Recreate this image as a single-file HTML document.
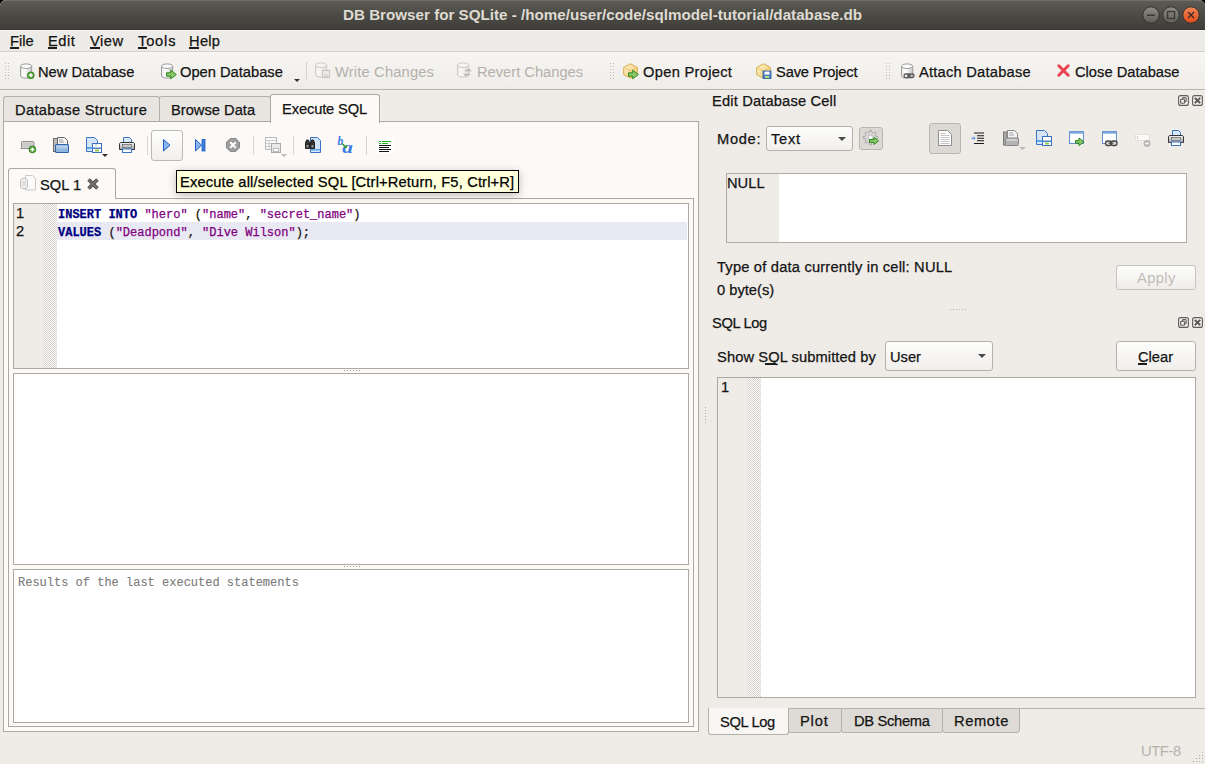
<!DOCTYPE html>
<html><head><meta charset="utf-8"><style>
*{box-sizing:border-box}
html,body{margin:0;padding:0;width:1205px;height:764px;overflow:hidden;background:#000}
body{font-family:"Liberation Sans",sans-serif;font-size:14.7px;position:relative}
.a{position:absolute}
svg.a{overflow:visible}
.t{position:absolute;line-height:1;white-space:pre;color:#141414;-webkit-text-stroke:0.25px currentColor}
.m{font-family:"Liberation Mono",monospace;font-size:12px}
#win{position:absolute;left:0;top:0;width:1205px;height:764px;background:#efebe7;border-radius:6px 6px 0 0;overflow:hidden}
#title{position:absolute;left:0;top:0;width:1205px;height:30px;background:linear-gradient(#5e5c55,#4b4a44 50%,#403f3b 96%,#353430 96%);box-shadow:inset 0 1px 0 rgba(255,255,255,.12)}
#menubar{position:absolute;left:0;top:30px;width:1205px;height:22px;background:#edebe7;border-bottom:1px solid #d3cfca;box-shadow:inset 0 1px 0 #f7f6f4}
#toolbar{position:absolute;left:0;top:52px;width:1205px;height:38px;background:linear-gradient(#f6f5f2,#f0ede9);border-bottom:1px solid #b9b5b0;box-shadow:inset 0 1px 0 #faf9f7}
.u{position:absolute;height:2px;background:#1c1c1c}
.dis{color:#b3b0ab;-webkit-text-stroke:0}
.frame{position:absolute;border:1px solid #aca8a2;background:#fff}
.chk{background-color:#fff;background-image:linear-gradient(45deg,#d9d5d0 25%,transparent 25%,transparent 75%,#d9d5d0 75%),linear-gradient(45deg,#d9d5d0 25%,transparent 25%,transparent 75%,#d0ccc7 75%);background-size:2px 2px;background-position:0 0,1px 1px}
</style></head><body>
<svg width="0" height="0" style="position:absolute"><defs>
<linearGradient id="gcyl" x1="0" x2="1" y1="0" y2="0"><stop offset="0" stop-color="#e9e9e9"/><stop offset=".35" stop-color="#ffffff"/><stop offset="1" stop-color="#c9c9c9"/></linearGradient>
<linearGradient id="gblue" x1="0" x2="0" y1="0" y2="1"><stop offset="0" stop-color="#c4daf3"/><stop offset="1" stop-color="#8fb6e3"/></linearGradient>
<linearGradient id="gbox" x1="0" x2="1" y1="0" y2="1"><stop offset="0" stop-color="#fff3cf"/><stop offset="1" stop-color="#f0c868"/></linearGradient>
<linearGradient id="gprn" x1="0" x2="0" y1="0" y2="1"><stop offset="0" stop-color="#f4f4f4"/><stop offset="1" stop-color="#a8a8a8"/></linearGradient>
<linearGradient id="gwb" x1="0" x2="0" y1="0" y2="1"><stop offset="0" stop-color="#8d8c87"/><stop offset="1" stop-color="#5e5d58"/></linearGradient><linearGradient id="gwc" x1="0" x2="0" y1="0" y2="1"><stop offset="0" stop-color="#f3875a"/><stop offset="1" stop-color="#de4b17"/></linearGradient>
<linearGradient id="gbtn" x1="0" x2="0" y1="0" y2="1"><stop offset="0" stop-color="#fdfdfc"/><stop offset="1" stop-color="#efedea"/></linearGradient>
</defs></svg>
<div id="win">
<div id="title"><div class="t " style="left:343px;top:7px;font-size:15.2px;font-weight:bold;color:#dfdbd2;-webkit-text-stroke:0">DB Browser for SQLite - /home/user/code/sqlmodel-tutorial/database.db</div>
<svg class="a" style="left:1142px;top:6px;" width="18" height="18" viewBox="0 0 18 18"><circle cx="9" cy="9" r="8.2" fill="url(#gwb)" stroke="#34332f" stroke-width="1"/><path d="M5 9.2h8" stroke="#3a3935" stroke-width="1.6"/></svg>
<svg class="a" style="left:1162px;top:6px;" width="18" height="18" viewBox="0 0 18 18"><circle cx="9" cy="9" r="8.2" fill="url(#gwb)" stroke="#34332f" stroke-width="1"/><rect x="5.5" y="5.5" width="7" height="7" fill="none" stroke="#3a3935" stroke-width="1.4"/></svg>
<svg class="a" style="left:1182px;top:6px;" width="18" height="18" viewBox="0 0 18 18"><circle cx="9" cy="9" r="8.2" fill="url(#gwc)" stroke="#34332f" stroke-width="1"/><path d="M6 6l6 6M12 6l-6 6" stroke="#3a2a20" stroke-width="1.4"/></svg>
</div>
<div id="menubar"><div class="t " style="left:10px;top:4px;">File</div>
<div class="u" style="left:10px;top:17px;width:9px"></div><div class="t " style="left:48px;top:4px;letter-spacing:0.5px;">Edit</div>
<div class="u" style="left:48px;top:17px;width:9px"></div><div class="t " style="left:90px;top:4px;letter-spacing:0.5px;">View</div>
<div class="u" style="left:90px;top:17px;width:10px"></div><div class="t " style="left:138px;top:4px;letter-spacing:0.8px;">Tools</div>
<div class="u" style="left:138px;top:17px;width:9px"></div><div class="t " style="left:189px;top:4px;letter-spacing:0.27px;">Help</div>
<div class="u" style="left:189px;top:17px;width:10px"></div></div>
<div id="toolbar"><div class="a" style="left:5px;top:11px;width:1px;height:1px;background:#bdb9b3"></div>
<div class="a" style="left:8px;top:11px;width:1px;height:1px;background:#bdb9b3"></div>
<div class="a" style="left:5px;top:14px;width:1px;height:1px;background:#bdb9b3"></div>
<div class="a" style="left:8px;top:14px;width:1px;height:1px;background:#bdb9b3"></div>
<div class="a" style="left:5px;top:17px;width:1px;height:1px;background:#bdb9b3"></div>
<div class="a" style="left:8px;top:17px;width:1px;height:1px;background:#bdb9b3"></div>
<div class="a" style="left:5px;top:20px;width:1px;height:1px;background:#bdb9b3"></div>
<div class="a" style="left:8px;top:20px;width:1px;height:1px;background:#bdb9b3"></div>
<div class="a" style="left:5px;top:23px;width:1px;height:1px;background:#bdb9b3"></div>
<div class="a" style="left:8px;top:23px;width:1px;height:1px;background:#bdb9b3"></div>
<div class="a" style="left:5px;top:26px;width:1px;height:1px;background:#bdb9b3"></div>
<div class="a" style="left:8px;top:26px;width:1px;height:1px;background:#bdb9b3"></div>
<div class="a" style="left:610px;top:11px;width:1px;height:1px;background:#bdb9b3"></div>
<div class="a" style="left:613px;top:11px;width:1px;height:1px;background:#bdb9b3"></div>
<div class="a" style="left:610px;top:14px;width:1px;height:1px;background:#bdb9b3"></div>
<div class="a" style="left:613px;top:14px;width:1px;height:1px;background:#bdb9b3"></div>
<div class="a" style="left:610px;top:17px;width:1px;height:1px;background:#bdb9b3"></div>
<div class="a" style="left:613px;top:17px;width:1px;height:1px;background:#bdb9b3"></div>
<div class="a" style="left:610px;top:20px;width:1px;height:1px;background:#bdb9b3"></div>
<div class="a" style="left:613px;top:20px;width:1px;height:1px;background:#bdb9b3"></div>
<div class="a" style="left:610px;top:23px;width:1px;height:1px;background:#bdb9b3"></div>
<div class="a" style="left:613px;top:23px;width:1px;height:1px;background:#bdb9b3"></div>
<div class="a" style="left:610px;top:26px;width:1px;height:1px;background:#bdb9b3"></div>
<div class="a" style="left:613px;top:26px;width:1px;height:1px;background:#bdb9b3"></div>
<div class="a" style="left:886px;top:11px;width:1px;height:1px;background:#bdb9b3"></div>
<div class="a" style="left:889px;top:11px;width:1px;height:1px;background:#bdb9b3"></div>
<div class="a" style="left:886px;top:14px;width:1px;height:1px;background:#bdb9b3"></div>
<div class="a" style="left:889px;top:14px;width:1px;height:1px;background:#bdb9b3"></div>
<div class="a" style="left:886px;top:17px;width:1px;height:1px;background:#bdb9b3"></div>
<div class="a" style="left:889px;top:17px;width:1px;height:1px;background:#bdb9b3"></div>
<div class="a" style="left:886px;top:20px;width:1px;height:1px;background:#bdb9b3"></div>
<div class="a" style="left:889px;top:20px;width:1px;height:1px;background:#bdb9b3"></div>
<div class="a" style="left:886px;top:23px;width:1px;height:1px;background:#bdb9b3"></div>
<div class="a" style="left:889px;top:23px;width:1px;height:1px;background:#bdb9b3"></div>
<div class="a" style="left:886px;top:26px;width:1px;height:1px;background:#bdb9b3"></div>
<div class="a" style="left:889px;top:26px;width:1px;height:1px;background:#bdb9b3"></div>
<div class="a" style="left:306px;top:10px;width:1px;height:18px;background:#d6d2cc"></div>
<div class="t " style="left:38px;top:13px;">New Database</div>
<div class="t " style="left:180px;top:13px;">Open Database</div>
<div class="t dis" style="left:335px;top:13px;letter-spacing:0.17px;">Write Changes</div>
<div class="t dis" style="left:477px;top:13px;">Revert Changes</div>
<div class="t " style="left:643px;top:13px;letter-spacing:0.29px;">Open Project</div>
<div class="t " style="left:776px;top:13px;letter-spacing:-0.15px;">Save Project</div>
<div class="t " style="left:919px;top:13px;letter-spacing:0.22px;">Attach Database</div>
<div class="t " style="left:1075px;top:13px;">Close Database</div>
<svg class="a" style="left:294px;top:27px;" width="6" height="3" viewBox="0 0 6 3"><path d="M0 0h6l-3 3z" fill="#333"/></svg>
</div>
<svg class="a" style="left:20px;top:63px;" width="16" height="16" viewBox="0 0 16 16"><path d="M0.5 3.2v9.6c0 1.3 2.5 2.3 5.6 2.3s5.6-1 5.6-2.3V3.2" fill="url(#gcyl)" stroke="#9d9d9d"/><ellipse cx="6.1" cy="3.2" rx="5.6" ry="2.3" fill="#fafafa" stroke="#9d9d9d"/><circle cx="10.8" cy="12.3" r="3.4" fill="#54a336" stroke="#2f7d1c" stroke-width=".9"/><path d="M10.8 10.3v4M8.8 12.3h4" stroke="#fff" stroke-width="1.5"/></svg>
<svg class="a" style="left:161px;top:63px;" width="16" height="16" viewBox="0 0 16 16"><path d="M0.5 3.2v9.6c0 1.3 2.5 2.3 5.6 2.3s5.6-1 5.6-2.3V3.2" fill="url(#gcyl)" stroke="#9d9d9d"/><ellipse cx="6.1" cy="3.2" rx="5.6" ry="2.3" fill="#fafafa" stroke="#9d9d9d"/><path d="M5.5 9.8h4.2V7.2l5.6 4.3-5.6 4.3v-2.6H5.5z" fill="#8bc66a" stroke="#2b8a1b" stroke-width="1"/></svg>
<svg class="a" style="left:315px;top:62px;opacity:0.45;" width="16" height="16" viewBox="0 0 16 16"><path d="M0.5 3.2v9.6c0 1.3 2.5 2.3 5.6 2.3s5.6-1 5.6-2.3V3.2" fill="url(#gcyl)" stroke="#9d9d9d"/><ellipse cx="6.1" cy="3.2" rx="5.6" ry="2.3" fill="#fafafa" stroke="#9d9d9d"/><rect x="7.5" y="8.5" width="7" height="7" fill="#e8e8e8" stroke="#8a8a8a"/><rect x="9" y="12" width="4" height="3" fill="#bbb"/></svg>
<svg class="a" style="left:457px;top:62px;opacity:0.45;" width="16" height="16" viewBox="0 0 16 16"><path d="M0.5 3.2v9.6c0 1.3 2.5 2.3 5.6 2.3s5.6-1 5.6-2.3V3.2" fill="url(#gcyl)" stroke="#9d9d9d"/><ellipse cx="6.1" cy="3.2" rx="5.6" ry="2.3" fill="#fafafa" stroke="#9d9d9d"/><path d="M8 8.5h5l-1.5-1.5M13 12.5H8l1.5 1.5" fill="none" stroke="#777" stroke-width="1.5"/></svg>
<svg class="a" style="left:623px;top:63px;" width="16" height="16" viewBox="0 0 16 16"><path d="M7.5 0.8l6.8 3.6v7.2l-6.8 3.6-6.8-3.6V4.4z" fill="url(#gbox)" stroke="#d9ad4a" stroke-width="1"/><path d="M0.8 4.4l6.7 3.5 6.8-3.5M7.5 7.9v7" fill="none" stroke="#e5bf6a" stroke-width=".8"/><path d="M5.5 9.8h4.2V7.2l5.6 4.3-5.6 4.3v-2.6H5.5z" fill="#8bc66a" stroke="#2b8a1b" stroke-width="1"/></svg>
<svg class="a" style="left:756px;top:63px;" width="16" height="16" viewBox="0 0 16 16"><path d="M7.5 0.8l6.8 3.6v7.2l-6.8 3.6-6.8-3.6V4.4z" fill="url(#gbox)" stroke="#d9ad4a" stroke-width="1"/><path d="M0.8 4.4l6.7 3.5 6.8-3.5M7.5 7.9v7" fill="none" stroke="#e5bf6a" stroke-width=".8"/><rect x="7" y="8" width="8" height="7.5" fill="#4d7fc4" stroke="#2c5a9c" stroke-width=".8"/><rect x="8.5" y="8.6" width="5" height="3" fill="#fff"/><rect x="9" y="13" width="4" height="2" fill="#a9e07a"/></svg>
<svg class="a" style="left:901px;top:63px;" width="16" height="16" viewBox="0 0 16 16"><path d="M0.5 3.2v9.6c0 1.3 2.5 2.3 5.6 2.3s5.6-1 5.6-2.3V3.2" fill="url(#gcyl)" stroke="#9d9d9d"/><ellipse cx="6.1" cy="3.2" rx="5.6" ry="2.3" fill="#fafafa" stroke="#9d9d9d"/><rect x="3" y="11" width="5.5" height="3.6" rx="1.8" fill="none" stroke="#555" stroke-width="1.3"/><rect x="7.5" y="11" width="5.5" height="3.6" rx="1.8" fill="none" stroke="#555" stroke-width="1.3"/><path d="M6 12.8h4" stroke="#555" stroke-width="1.3"/></svg>
<svg class="a" style="left:1056px;top:63px;" width="16" height="16" viewBox="0 0 16 16"><path d="M2.8 2.8l9.4 9.4M12.2 2.8l-9.4 9.4" stroke="#e8434e" stroke-width="3" stroke-linecap="round"/></svg>
 <!-- left tab widget -->
 <div class="a" style="left:3px;top:96px;width:157px;height:26px;background:#e8e5e1;border:1px solid #b4b0aa;border-bottom:none;border-radius:3px 3px 0 0"></div>
 <div class="a" style="left:159px;top:96px;width:112px;height:26px;background:#e8e5e1;border:1px solid #b4b0aa;border-bottom:none;border-radius:3px 3px 0 0"></div>
 <div class="t" style="left:15px;top:103px;letter-spacing:0.31px;">Database Structure</div>
 <div class="t" style="left:171px;top:103px">Browse Data</div>
 <div id="lpane" class="a" style="left:3px;top:121px;width:696px;height:611px;background:#fcf9f6;border:1px solid #aca8a2"></div>
 <div class="a" style="left:270px;top:94px;width:110px;height:29px;background:#fcf9f6;border:1px solid #aca8a2;border-bottom:none;border-radius:3px 3px 0 0"></div>
 <div class="t" style="left:282px;top:102px;letter-spacing:-0.13px;">Execute SQL</div>

 <!-- SQL toolbar execute button -->
 <div class="a" style="left:151px;top:130px;width:32px;height:31px;border:1px solid #bdb9b4;border-radius:3px;background:linear-gradient(#fefefd,#f2f0ed)"></div>
 <div class="a" style="left:147px;top:136px;width:1px;height:19px;background:#d9d5d0"></div>
 <div class="a" style="left:253px;top:136px;width:1px;height:19px;background:#d9d5d0"></div>
 <div class="a" style="left:293px;top:136px;width:1px;height:19px;background:#d9d5d0"></div>
 <div class="a" style="left:366px;top:136px;width:1px;height:19px;background:#d9d5d0"></div>

 <!-- SQL editor tab -->
 <div class="a" style="left:8px;top:198px;width:686px;height:529px;background:#fcf9f6;border:1px solid #aca8a2"></div>
 <div class="a" style="left:8px;top:168px;width:108px;height:31px;background:#fcf9f6;border:1px solid #aca8a2;border-bottom:none;border-radius:3px 3px 0 0"></div>
 <div class="t" style="left:40px;top:178px">SQL 1</div>

 <!-- editor -->
 <div class="frame" style="left:13px;top:203px;width:676px;height:166px"></div>
 <div class="a" style="left:14px;top:204px;width:29px;height:164px;background:#efebe7"></div>
 <div class="a" style="left:43px;top:204px;width:14px;height:164px;background-color:#fff;background-image:linear-gradient(45deg,#d4d0cb 25%,transparent 25%,transparent 75%,#d4d0cb 75%),linear-gradient(45deg,#d4d0cb 25%,transparent 25%,transparent 75%,#d4d0cb 75%);background-size:2px 2px;background-position:0 0,1px 1px"></div>
 <div class="a" style="left:57px;top:222px;width:630px;height:18px;background:#e9e9f3"></div>
 <div class="t" style="left:16px;top:206px">1</div>
 <div class="t" style="left:16px;top:224px">2</div>
 <div class="t m" style="left:58px;top:209px"><b style="color:#000080">INSERT INTO</b> <span style="color:#800080">"hero"</span> (<span style="color:#800080">"name"</span>, <span style="color:#800080">"secret_name"</span>)</div>
 <div class="t m" style="left:58px;top:227px"><b style="color:#000080">VALUES</b> (<span style="color:#800080">"Deadpond"</span>, <span style="color:#800080">"Dive Wilson"</span>);</div>

 <div class="frame" style="left:13px;top:373px;width:676px;height:192px"></div>
 <div class="frame" style="left:13px;top:569px;width:676px;height:154px"></div>
 <div class="t m" style="left:18px;top:577px;color:#7a7a7a;-webkit-text-stroke:0.1px">Results of the last executed statements</div>

 <!-- tooltip -->
 <div class="a" style="left:176px;top:170px;width:343px;height:23px;background:#ffffdc;border:1px solid #000;box-shadow:0 2px 8px rgba(0,0,0,.25)"></div>
 <div class="t" style="left:180px;top:175px;color:#000;letter-spacing:0.15px;">Execute all/selected SQL [Ctrl+Return, F5, Ctrl+R]</div>

 <!-- right dock -->
 <div class="t" style="left:712px;top:94px;letter-spacing:0.15px;">Edit Database Cell</div>
 <div class="t" style="left:717px;top:132px;letter-spacing:0.67px;">Mode:</div>
 <div class="a" style="left:766px;top:126px;width:87px;height:25px;border:1px solid #b4b0aa;border-radius:3px;background:linear-gradient(#fdfdfc,#f1efec)"></div>
 <div class="t" style="left:771px;top:132px;letter-spacing:0.7px;">Text</div>
 <div class="a" style="left:859px;top:127px;width:24px;height:23px;border:1px solid #b9b5b0;border-radius:3px;background:#dcd8d3"></div>
 <div class="a" style="left:929px;top:123px;width:32px;height:31px;border:1px solid #b9b5b0;border-radius:3px;background:#dcd8d3"></div>

 <div class="a" style="left:726px;top:173px;width:461px;height:70px;border:1px solid #aca8a2;background:#fff"></div>
 <div class="a" style="left:727px;top:174px;width:52px;height:68px;background:#efebe7"></div>
 <div class="t" style="left:727px;top:176px">NULL</div>
 <div class="t" style="left:717px;top:260px;letter-spacing:0.19px;">Type of data currently in cell: NULL</div>
 <div class="t" style="left:717px;top:283px">0 byte(s)</div>
 <div class="a" style="left:1116px;top:265px;width:80px;height:25px;border:1px solid #c6c2bd;border-radius:3px;background:linear-gradient(#fdfdfc,#efedea)"></div>
 <div class="t dis" style="left:1137px;top:271px;color:#bfbcb7;-webkit-text-stroke:0;letter-spacing:0.4px">Apply</div>

 <div class="t" style="left:712px;top:316px;letter-spacing:-0.37px;">SQL Log</div>
 <div class="t" style="left:717px;top:350px;letter-spacing:0.09px;">Show SQL submitted by</div>
 <div class="a" style="left:885px;top:341px;width:108px;height:30px;border:1px solid #b4b0aa;border-radius:3px;background:linear-gradient(#fdfdfc,#f1efec)"></div>
 <div class="t" style="left:890px;top:350px">User</div>
 <div class="u" style="left:765px;top:363px;width:11px"></div>
 <div class="a" style="left:1116px;top:341px;width:80px;height:30px;border:1px solid #b4b0aa;border-radius:3px;background:linear-gradient(#fdfdfc,#f1efec)"></div>
 <div class="t" style="left:1138px;top:350px">Clear</div>
 <div class="u" style="left:1138px;top:363px;width:9px"></div>

 <div class="a" style="left:717px;top:377px;width:479px;height:321px;border:1px solid #aca8a2;background:#fff"></div>
 <div class="a" style="left:718px;top:378px;width:29px;height:319px;background:#efebe7"></div>
 <div class="a" style="left:747px;top:378px;width:14px;height:319px;background-color:#fff;background-image:linear-gradient(45deg,#d4d0cb 25%,transparent 25%,transparent 75%,#d4d0cb 75%),linear-gradient(45deg,#d4d0cb 25%,transparent 25%,transparent 75%,#d4d0cb 75%);background-size:2px 2px;background-position:0 0,1px 1px"></div>
 <div class="t" style="left:721px;top:380px">1</div>

 <!-- bottom tabs -->
 <div class="a" style="left:708px;top:708px;width:497px;height:1px;background:#b4b0aa"></div>
 <div class="a" style="left:788px;top:708px;width:54px;height:25px;background:#dedad5;border:1px solid #b4b0aa;border-radius:0 0 3px 3px"></div>
 <div class="a" style="left:841px;top:708px;width:102px;height:25px;background:#dedad5;border:1px solid #b4b0aa;border-radius:0 0 3px 3px"></div>
 <div class="a" style="left:942px;top:708px;width:78px;height:25px;background:#dedad5;border:1px solid #b4b0aa;border-radius:0 0 3px 3px"></div>
 <div class="a" style="left:708px;top:708px;width:81px;height:27px;background:#f7f6f3;border:1px solid #b4b0aa;border-top:none;border-radius:0 0 3px 3px"></div>
 <div class="t" style="left:720px;top:715px;letter-spacing:-0.37px;">SQL Log</div>
 <div class="t" style="left:800px;top:714px;letter-spacing:0.8px;">Plot</div>
 <div class="t" style="left:854px;top:714px;letter-spacing:-0.31px;">DB Schema</div>
 <div class="t" style="left:954px;top:714px;letter-spacing:0.6px;">Remote</div>
 <div class="t" style="left:1141px;top:744px;color:#b5b2ad;-webkit-text-stroke:0;letter-spacing:-0.37px;">UTF-8</div>
<svg class="a" style="left:20px;top:137px;" width="16" height="16" viewBox="0 0 16 16"><path d="M0.5 11.5h2" stroke="#8c8c8c"/><rect x="1.5" y="4.5" width="12.5" height="7" rx="1" fill="#dedede" stroke="#8e8e8e"/><rect x="2.5" y="5.5" width="10.5" height="5" fill="#c9c9c9"/><circle cx="12.4" cy="12.4" r="3.4" fill="#54a336" stroke="#2f7d1c" stroke-width=".9"/><path d="M12.4 10.4v4M10.4 12.4h4" stroke="#fff" stroke-width="1.5"/></svg>
<svg class="a" style="left:53px;top:137px;" width="16" height="16" viewBox="0 0 16 16"><rect x="0.5" y="1.5" width="4" height="13" fill="#bdbdbd" stroke="#6b6b6b"/><path d="M4.5 0.5h7l3 3v6h-10z" fill="#f4f4f4" stroke="#666"/><path d="M6 3h4M6 5h5" stroke="#999"/><rect x="2.5" y="7.5" width="13" height="8" rx=".5" fill="#8fb5e0" stroke="#2f63a8"/><rect x="3.5" y="8.5" width="11" height="3" fill="#b3cdeb"/></svg>
<svg class="a" style="left:86px;top:137px;" width="16" height="16" viewBox="0 0 16 16"><path d="M0.5 0.5h8l3 3v11h-11z" fill="#d5e5f8" stroke="#3b73c4"/><rect x="1" y="10" width="5" height="2" fill="#5aa9ea"/><rect x="6.5" y="6.5" width="9" height="9" fill="#fff" stroke="#3b6fbf"/><rect x="6.5" y="10.5" width="9" height="1.5" fill="#4f82c8"/><rect x="9" y="12.5" width="4" height="2" fill="#8fd04a"/><rect x="9.5" y="7.5" width="1" height="1" fill="#3b6fbf"/></svg>
<svg class="a" style="left:102px;top:154px;" width="6" height="3" viewBox="0 0 6 3"><path d="M0 0h6l-3 3z" fill="#333"/></svg>
<svg class="a" style="left:119px;top:137px;" width="16" height="16" viewBox="0 0 16 16"><path d="M4.5 0.5h6l2 2v5h-8z" fill="#d9e8fa" stroke="#3b73c4"/><path d="M2 5.5h12c1 0 1.5 .8 1.5 1.5v5.5H0.5V7c0-.7.5-1.5 1.5-1.5z" fill="url(#gprn)" stroke="#333"/><rect x="3.5" y="7.5" width="9" height="3" fill="#c8c8c8" stroke="#555" stroke-width=".6"/><rect x="3.5" y="12" width="9" height="3.5" fill="#fff" stroke="#3b73c4"/></svg>
<svg class="a" style="left:163px;top:139px;" width="8" height="13" viewBox="0 0 8 13"><path d="M0.5 0.5L7 6.2 0.5 12z" fill="#8ab4ea" stroke="#1f5fc9" stroke-width="1"/></svg>
<svg class="a" style="left:195px;top:139px;" width="11" height="13" viewBox="0 0 11 13"><path d="M0.5 0.5L6.5 6.2 0.5 12z" fill="#8ab4ea" stroke="#1f5fc9" stroke-width="1"/><rect x="7" y="0.5" width="3" height="11.5" fill="#3f7fd9" stroke="#1f5fc9" stroke-width=".8"/></svg>
<svg class="a" style="left:226px;top:138px;" width="14" height="14" viewBox="0 0 14 14"><path d="M4.2 0.5h5.6l3.7 3.7v5.6l-3.7 3.7H4.2L0.5 9.8V4.2z" fill="#9d9d9d" stroke="#8a8a8a"/><path d="M4.3 4.3l5.4 5.4M9.7 4.3l-5.4 5.4" stroke="#fff" stroke-width="2"/></svg>
<svg class="a" style="left:265px;top:137px;" width="16" height="16" viewBox="0 0 16 16"><rect x="0.5" y="0.5" width="11" height="12" fill="#fafafa" stroke="#bbb"/><path d="M1 3.5h10M4 3.5v9M1 6.5h10M1 9.5h6" stroke="#ccc"/><rect x="6.5" y="6.5" width="9" height="9" fill="#e8e8e8" stroke="#aaa"/><rect x="8.5" y="11.5" width="5" height="3" fill="#fff" stroke="#bbb"/></svg>
<svg class="a" style="left:281px;top:154px;" width="6" height="3" viewBox="0 0 6 3"><path d="M0 0h6l-3 3z" fill="#bbb"/></svg>
<svg class="a" style="left:305px;top:137px;" width="16" height="16" viewBox="0 0 16 16"><path d="M5.5 0.5h7l3 3v12h-10z" fill="#d5e5f8" stroke="#3b73c4"/><rect x="6" y="12" width="9" height="1.5" fill="#5aa9ea"/><path d="M0.5 6v5.5h4V6l-1-3h-2zM5.5 6v5.5h4V6l-1-3h-2z" fill="#333" stroke="#222"/><rect x="1.5" y="8" width="2" height="2.5" fill="#999"/><rect x="6.5" y="8" width="2" height="2.5" fill="#999"/></svg>
<svg class="a" style="left:338px;top:137px;" width="16" height="16" viewBox="0 0 16 16"><text x="-0.5" y="8" font-family="Liberation Serif" font-style="italic" font-weight="bold" font-size="11.5" fill="#3c7fe3">b</text><text x="4.2" y="15.8" font-family="Liberation Serif" font-style="italic" font-weight="bold" font-size="17" fill="#3c7fe3" transform="translate(4.2 15.8) scale(1.25 1) translate(-4.2 -15.8)">a</text><path d="M4 6.5l3.2 3.2" stroke="#3a9a3a" stroke-width="1.6"/><path d="M9 7.5v3.5H5.5z" fill="#3a9a3a"/></svg>
<svg class="a" style="left:377px;top:137px;" width="17" height="16" viewBox="0 0 17 16"><rect x="0" y="0" width="17" height="16" fill="#fff"/><path d="M2 4.5h2M5 4.5h9M2 6.5h2M5 6.5h6" stroke="#22bb22" stroke-width="1"/><path d="M2 8.5h12M2 10.5h10M2 12.5h12M2 14.5h10" stroke="#111" stroke-width="1"/></svg>
<svg class="a" style="left:20px;top:175px;" width="16" height="16" viewBox="0 0 16 16"><path d="M5.5 0.5h7l3 3v11.5h-10z" fill="#fafafa" stroke="#c9c9c9"/><rect x="0.5" y="3.5" width="7" height="10" rx="2.5" fill="#f1f1f1" stroke="#c1c1c1"/><path d="M3 6v5M5 6v5" stroke="#c9c9c9"/></svg>
<svg class="a" style="left:87px;top:178px;" width="12" height="12" viewBox="0 0 12 12"><path d="M1.6 1.6l8.8 8.8M10.4 1.6l-8.8 8.8" stroke="#4a4a4a" stroke-width="3.6"/><path d="M1.6 1.6l8.8 8.8M10.4 1.6l-8.8 8.8" stroke="#6e6e6e" stroke-width="2.2"/></svg>
<div class="a" style="left:344px;top:370px;width:1px;height:1px;background:#9d9994"></div>
<div class="a" style="left:344px;top:566px;width:1px;height:1px;background:#9d9994"></div>
<div class="a" style="left:347px;top:370px;width:1px;height:1px;background:#9d9994"></div>
<div class="a" style="left:347px;top:566px;width:1px;height:1px;background:#9d9994"></div>
<div class="a" style="left:350px;top:370px;width:1px;height:1px;background:#9d9994"></div>
<div class="a" style="left:350px;top:566px;width:1px;height:1px;background:#9d9994"></div>
<div class="a" style="left:353px;top:370px;width:1px;height:1px;background:#9d9994"></div>
<div class="a" style="left:353px;top:566px;width:1px;height:1px;background:#9d9994"></div>
<div class="a" style="left:356px;top:370px;width:1px;height:1px;background:#9d9994"></div>
<div class="a" style="left:356px;top:566px;width:1px;height:1px;background:#9d9994"></div>
<div class="a" style="left:359px;top:370px;width:1px;height:1px;background:#9d9994"></div>
<div class="a" style="left:359px;top:566px;width:1px;height:1px;background:#9d9994"></div>
<div class="a" style="left:950px;top:309px;width:1px;height:1px;background:#b3afa9"></div>
<div class="a" style="left:953px;top:309px;width:1px;height:1px;background:#b3afa9"></div>
<div class="a" style="left:956px;top:309px;width:1px;height:1px;background:#b3afa9"></div>
<div class="a" style="left:959px;top:309px;width:1px;height:1px;background:#b3afa9"></div>
<div class="a" style="left:962px;top:309px;width:1px;height:1px;background:#b3afa9"></div>
<div class="a" style="left:965px;top:309px;width:1px;height:1px;background:#b3afa9"></div>
<div class="a" style="left:705px;top:407px;width:1px;height:1px;background:#a9a5a0"></div>
<div class="a" style="left:705px;top:410px;width:1px;height:1px;background:#a9a5a0"></div>
<div class="a" style="left:705px;top:413px;width:1px;height:1px;background:#a9a5a0"></div>
<div class="a" style="left:705px;top:416px;width:1px;height:1px;background:#a9a5a0"></div>
<div class="a" style="left:705px;top:419px;width:1px;height:1px;background:#a9a5a0"></div>
<div class="a" style="left:705px;top:422px;width:1px;height:1px;background:#a9a5a0"></div>
<svg class="a" style="left:1178px;top:95px;" width="11" height="11" viewBox="0 0 11 11"><rect x="0.6" y="0.6" width="9.8" height="9.8" rx="2" fill="none" stroke="#5f5f5f" stroke-width="1.1"/><rect x="4.3" y="2.6" width="3.9" height="4" rx="1" fill="none" stroke="#5f5f5f" stroke-width="1.1"/><rect x="2.6" y="4.3" width="4" height="4" rx="1" fill="#efebe7" stroke="#5f5f5f" stroke-width="1.1"/></svg>
<svg class="a" style="left:1192px;top:95px;" width="11" height="11" viewBox="0 0 11 11"><rect x="0.6" y="0.6" width="9.8" height="9.8" rx="2" fill="none" stroke="#5f5f5f" stroke-width="1.1"/><path d="M2.8 2.8l5.4 5.4M8.2 2.8l-5.4 5.4" stroke="#555" stroke-width="1.9"/></svg>
<svg class="a" style="left:1178px;top:317px;" width="11" height="11" viewBox="0 0 11 11"><rect x="0.6" y="0.6" width="9.8" height="9.8" rx="2" fill="none" stroke="#5f5f5f" stroke-width="1.1"/><rect x="4.3" y="2.6" width="3.9" height="4" rx="1" fill="none" stroke="#5f5f5f" stroke-width="1.1"/><rect x="2.6" y="4.3" width="4" height="4" rx="1" fill="#efebe7" stroke="#5f5f5f" stroke-width="1.1"/></svg>
<svg class="a" style="left:1192px;top:317px;" width="11" height="11" viewBox="0 0 11 11"><rect x="0.6" y="0.6" width="9.8" height="9.8" rx="2" fill="none" stroke="#5f5f5f" stroke-width="1.1"/><path d="M2.8 2.8l5.4 5.4M8.2 2.8l-5.4 5.4" stroke="#555" stroke-width="1.9"/></svg>
<svg class="a" style="left:838px;top:137px;" width="8" height="4" viewBox="0 0 8 4"><path d="M0 0h8l-4 4z" fill="#4a4a4a"/></svg>
<svg class="a" style="left:978px;top:354px;" width="8" height="4" viewBox="0 0 8 4"><path d="M0 0h8l-4 4z" fill="#4a4a4a"/></svg>
<svg class="a" style="left:863px;top:130px;" width="16" height="16" viewBox="0 0 16 16"><path d="M12.68 6.36 L14.74 6.56 L14.74 8.44 L12.68 8.64 L11.96 10.36 L13.29 11.95 L11.95 13.29 L10.36 11.96 L8.64 12.68 L8.44 14.74 L6.56 14.74 L6.36 12.68 L4.64 11.96 L3.05 13.29 L1.71 11.95 L3.04 10.36 L2.32 8.64 L0.26 8.44 L0.26 6.56 L2.32 6.36 L3.04 4.64 L1.71 3.05 L3.05 1.71 L4.64 3.04 L6.36 2.32 L6.56 0.26 L8.44 0.26 L8.64 2.32 L10.36 3.04 L11.95 1.71 L13.29 3.05 L11.96 4.64Z" fill="#dcdcdc" stroke="#9a9a9a" stroke-width=".8"/><circle cx="7.5" cy="7.5" r="2.6" fill="#f4f4f4" stroke="#a5a5a5" stroke-width=".8"/><path d="M6.5 9.5h4.5V7.3l4.5 3.6-4.5 3.6v-2.2H6.5z" fill="#8bc66a" stroke="#2b8a1b"/></svg>
<svg class="a" style="left:938px;top:130px;" width="14" height="16" viewBox="0 0 14 16"><path d="M0.5 0.5h9l4 4v11h-13z" fill="#fff" stroke="#8d8d8d"/><path d="M2.5 5.5h9M2.5 7.5h9M2.5 9.5h9M2.5 11.5h9M2.5 13.5h9M2.5 3.5h5" stroke="#c4c4c4"/></svg>
<svg class="a" style="left:971px;top:132px;" width="14" height="13" viewBox="0 0 14 13"><path d="M3 1h10M6 3.8h7M6 6.3h7M6 8.8h7M3 11.5h10" stroke="#1a1a1a" stroke-width="1.1"/><path d="M0.5 6.3h3" stroke="#5a9be6" stroke-width="1.2"/><path d="M2.5 4.3l2.2 2-2.2 2z" fill="#5a9be6"/></svg>
<svg class="a" style="left:1003px;top:130px;" width="16" height="16" viewBox="0 0 16 16"><rect x="0.5" y="2" width="3.5" height="13" fill="#aaa" stroke="#777"/><path d="M4.5 0.5h7l3 3v6h-10z" fill="#f2f2f2" stroke="#888"/><path d="M6 3h4M6 5h5" stroke="#aaa"/><rect x="2.5" y="8" width="13" height="7.5" rx="1" fill="#b4b4b4" stroke="#888"/><rect x="3.5" y="9" width="11" height="2" fill="#cfcfcf"/></svg>
<svg class="a" style="left:1019px;top:147px;" width="7" height="3" viewBox="0 0 7 3"><path d="M0 0h7l-3.5 3z" fill="#bbb"/></svg>
<svg class="a" style="left:1036px;top:130px;" width="16" height="16" viewBox="0 0 16 16"><path d="M0.5 0.5h8l3 3v11h-11z" fill="#d5e5f8" stroke="#3b73c4"/><rect x="1" y="10" width="5" height="2" fill="#5aa9ea"/><rect x="6.5" y="6.5" width="9" height="9" fill="#fff" stroke="#3b6fbf"/><rect x="6.5" y="10.5" width="9" height="1.5" fill="#4f82c8"/><rect x="9" y="12.5" width="4" height="2" fill="#8fd04a"/></svg>
<svg class="a" style="left:1069px;top:131px;" width="16" height="16" viewBox="0 0 16 16"><rect x="0.5" y="0.5" width="14" height="12" fill="#fff" stroke="#5f8fd0"/><rect x="0.5" y="0.5" width="14" height="2.2" fill="#7ea7df"/><path d="M6.5 9.5h3.5V7l5 3.8-5 3.8v-2.5H6.5z" fill="#8bc66a" stroke="#2b8a1b"/></svg>
<svg class="a" style="left:1102px;top:131px;" width="16" height="16" viewBox="0 0 16 16"><rect x="0.5" y="0.5" width="14" height="12" fill="#fff" stroke="#5f8fd0"/><rect x="0.5" y="0.5" width="14" height="2.2" fill="#7ea7df"/><rect x="3.5" y="10" width="6" height="4.5" rx="2.2" fill="#ddd" stroke="#444" stroke-width="1.3"/><rect x="9" y="10" width="6" height="4.5" rx="2.2" fill="#ddd" stroke="#444" stroke-width="1.3"/><path d="M6.5 12.2h5" stroke="#444" stroke-width="1.2"/></svg>
<svg class="a" style="left:1135px;top:134px;" width="16" height="13" viewBox="0 0 16 13"><rect x="0.5" y="0.5" width="14" height="6" fill="#fcfbfa" stroke="#e2e0dc"/><path d="M2.5 2v3" stroke="#ccc"/><circle cx="12" cy="9.5" r="3" fill="#c8c8c8" stroke="#aaa"/><path d="M10.5 9.5h3" stroke="#fff" stroke-width="1.2"/></svg>
<svg class="a" style="left:1168px;top:130px;" width="16" height="16" viewBox="0 0 16 16"><path d="M4.5 0.5h6l2 2v5h-8z" fill="#d9e8fa" stroke="#3b73c4"/><path d="M2 5.5h12c1 0 1.5 .8 1.5 1.5v5.5H0.5V7c0-.7.5-1.5 1.5-1.5z" fill="url(#gprn)" stroke="#333"/><rect x="3.5" y="7.5" width="9" height="3" fill="#c8c8c8" stroke="#555" stroke-width=".6"/><rect x="3.5" y="12" width="9" height="3.5" fill="#fff" stroke="#3b73c4"/></svg>
<div class="a" style="left:1202px;top:752px;width:1px;height:1px;background:#aaa6a0"></div>
<div class="a" style="left:1199px;top:755px;width:1px;height:1px;background:#aaa6a0"></div>
<div class="a" style="left:1202px;top:755px;width:1px;height:1px;background:#aaa6a0"></div>
<div class="a" style="left:1196px;top:758px;width:1px;height:1px;background:#aaa6a0"></div>
<div class="a" style="left:1199px;top:758px;width:1px;height:1px;background:#aaa6a0"></div>
<div class="a" style="left:1202px;top:758px;width:1px;height:1px;background:#aaa6a0"></div>
<div class="a" style="left:1193px;top:761px;width:1px;height:1px;background:#aaa6a0"></div>
<div class="a" style="left:1196px;top:761px;width:1px;height:1px;background:#aaa6a0"></div>
<div class="a" style="left:1199px;top:761px;width:1px;height:1px;background:#aaa6a0"></div>
<div class="a" style="left:1202px;top:761px;width:1px;height:1px;background:#aaa6a0"></div>
</div>
</body></html>
